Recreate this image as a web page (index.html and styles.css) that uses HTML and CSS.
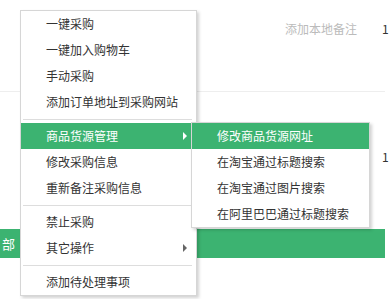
FILE: index.html
```html
<!DOCTYPE html>
<html lang="zh-CN">
<head>
    <meta charset="UTF-8">
    <title>采购菜单</title>
    <link rel="stylesheet" href="styles.css">
</head>
<body>

    <!-- Table behind the menu -->
    <div class="order-table">
        <div class="order-row first">
            <span class="note">添加本地备注</span>
            <span class="qty">1</span>
        </div>
        <div class="order-row second">
            <span class="qty">1</span>
        </div>
        <div class="batch-bar">部</div>
    </div>

    <!-- Context menu -->
    <ul class="menu main-menu">
        <li class="menu-item">一键采购</li>
        <li class="menu-item">一键加入购物车</li>
        <li class="menu-item">手动采购</li>
        <li class="menu-item">添加订单地址到采购网站</li>
        <li class="menu-sep"></li>
        <li class="menu-item has-sub active">商品货源管理</li>
        <li class="menu-item">修改采购信息</li>
        <li class="menu-item">重新备注采购信息</li>
        <li class="menu-sep"></li>
        <li class="menu-item">禁止采购</li>
        <li class="menu-item has-sub">其它操作</li>
        <li class="menu-sep"></li>
        <li class="menu-item">添加待处理事项</li>
    </ul>

    <ul class="menu sub-menu">
        <li class="menu-item active">修改商品货源网址</li>
        <li class="menu-item">在淘宝通过标题搜索</li>
        <li class="menu-item">在淘宝通过图片搜索</li>
        <li class="menu-item">在阿里巴巴通过标题搜索</li>
    </ul>

</body>
</html>
```

FILE: styles.css
```css
/* Page */
body {
    margin: 0;
    background: #fff;
    font-family: "Noto Sans CJK SC", "Microsoft YaHei", sans-serif;
    font-size: 12px;
    color: #333;
    position: relative;
    width: 392px;
    height: 299px;
    overflow: hidden;
}

/* Table behind */
.order-table {
    width: 385px;
}

.order-row {
    display: flex;
    align-items: flex-start;
    line-height: 16px;
    box-sizing: border-box;
    white-space: nowrap;
}

.order-row.first {
    height: 92px;
    padding-top: 21px;
    padding-left: 285px;
    border-bottom: 1px solid #eee;
}

.order-row.second {
    height: 137px;
    padding-top: 57px;
    padding-left: 382px;
}

.note {
    color: #bbb;
    width: 72px;
}

.qty {
    margin-left: 25px;
    color: #333;
}

.order-row.second .qty {
    margin-left: 0;
}

.batch-bar {
    height: 29px;
    line-height: 29px;
    background: #3cb371;
    color: #fff;
    padding-left: 2px;
    font-size: 13px;
}

/* Menus */
.menu {
    list-style: none;
    margin: 0;
    padding: 0;
    position: absolute;
    background: #fff;
    border: 1px solid #d6d6d6;
    box-shadow: 2px 2px 3px rgba(0, 0, 0, 0.18);
}

.main-menu {
    left: 20px;
    top: 10px;
    width: 171px;
    padding-right: 4px;
}

.sub-menu {
    left: 191px;
    top: 122px;
    width: 177px;
}

.menu-item {
    position: relative;
    height: 26px;
    line-height: 26px;
    padding-left: 25px;
    white-space: nowrap;
}

.menu-item.active {
    background: #3cb371;
    color: #fff;
}

.menu-sep {
    height: 1px;
    background: #ddd;
    margin: 4px 0 3px 2px;
}

/* Submenu arrow */
.has-sub::after {
    content: "";
    position: absolute;
    right: 5px;
    top: 9px;
    border-left: 4px solid #666;
    border-top: 4px solid transparent;
    border-bottom: 4px solid transparent;
}

.has-sub.active::after {
    border-left-color: #fff;
}
```
